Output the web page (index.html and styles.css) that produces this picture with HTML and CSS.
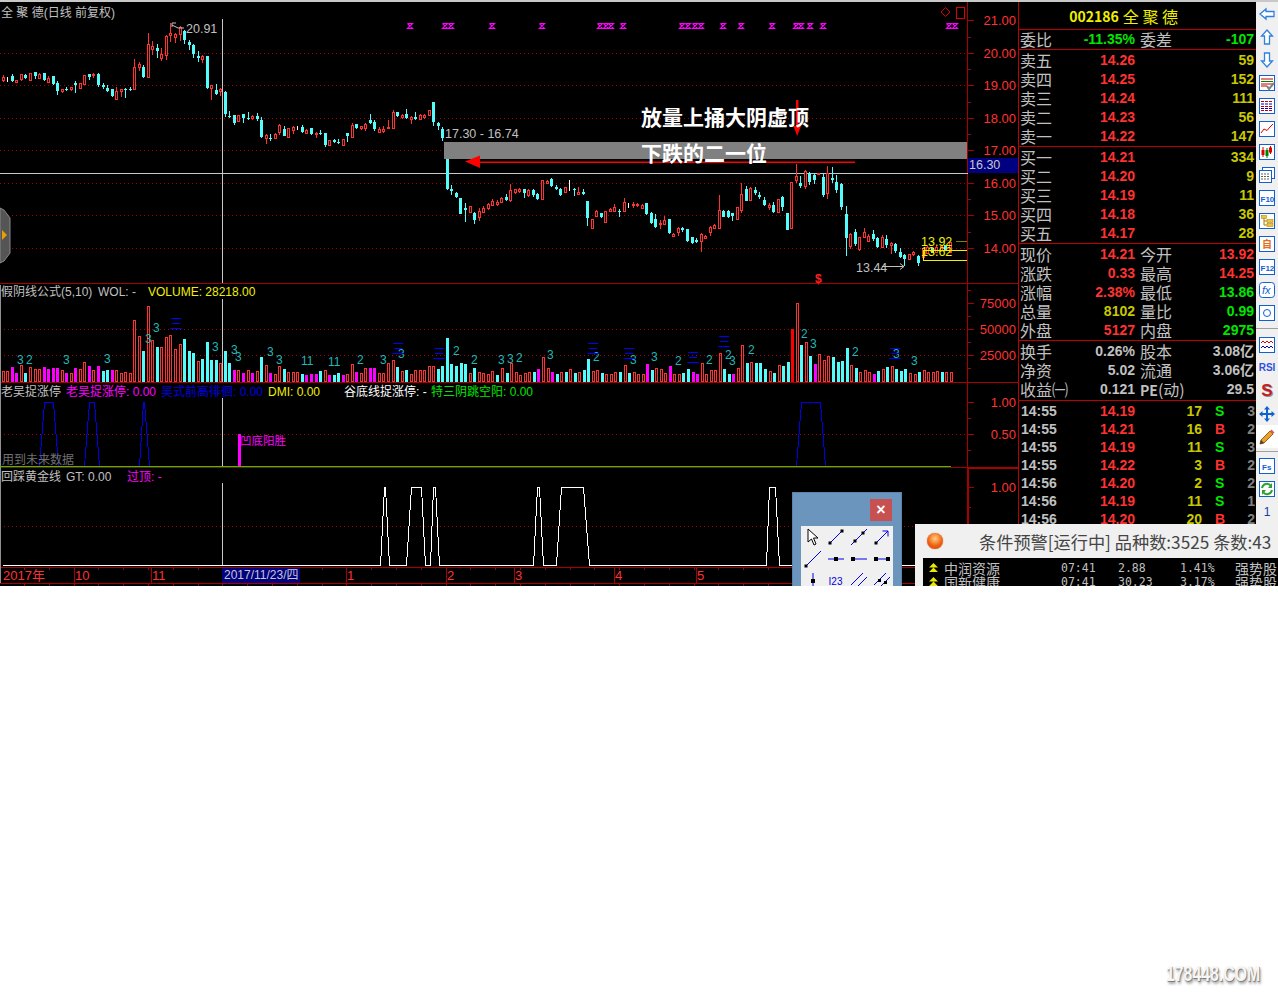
FILE: index.html
```html
<!DOCTYPE html>
<html lang="zh-CN">
<head>
    <meta charset="UTF-8">
    <meta name="viewport" content="width=device-width, initial-scale=1.0">
    <title>全聚德 日线</title>
    <link rel="stylesheet" href="styles.css">
</head>
<body>
    <div class="app">
        <div class="top-strip"></div>
        <div class="main">
            <svg class="chart" width="1018" height="584" viewBox="0 2 1018 584">
                <!-- Сетка и оси -->
                <g class="dots">
                    <path d="M0 53.5H968M0 85.5H968M0 118.5H968M0 150.5H968M0 183.5H968M0 215.5H968M0 248.5H968"/>
                    <path d="M0 329.5H968M0 355.5H968M0 434.5H968M0 526.5H968"/>
                </g>
                <g class="axis">
                    <path d="M0 283.5H1018M0 382.5H1018M0 467.5H1018M0 567.5H968M0 583.5H968"/>
                    <path d="M967.5 2V566"/>
                    <path class="thick" d="M968 468H1018M968 468V567"/>
                    <path id="ticks" d=""/>
                </g>
                <path class="left-edge" d="M0.5 285V583"/>

                <!-- Перекрестие -->
                <path class="cross" d="M222.5 19V283M222.5 299V382M222.5 398V467M222.5 483V566M0 173.5H968"/>

                <g id="candles"></g>
                <g id="volumes"></g>
                <path id="blue-humps" class="hump-blue" d=""/>
                <path id="white-humps" class="hump-white" d=""/>
                <path class="green-line" d="M0 466.5H951"/>
                <g id="marks" class="marks"></g>

                <!-- Рамка и стрелки разметки -->
                <rect class="band" x="444" y="142" width="523" height="17"/>
                <path class="red-arrow" d="M480 161.5H855V163H480Z"/>
                <path class="red-arrow" d="M465 161.5L480 155.5V168Z"/>
                <path class="red-arrow" d="M796 100H798.500V126H801L797.200 136L793.500 126H796Z"/>
                <text class="note" x="641" y="125">放量上捅大阴虚顶</text>
                <text class="note" x="641" y="161">下跌的二一位</text>

                <path class="price-line" d="M923 250.500H967M923 260.500H967M923.500 250V261"/>
                <path class="price-line dim" d="M956 241.500H967"/>
                <path class="red-outline" d="M945.500 7.500L950 12L945.500 16.500L941 12Z"/>
                <rect class="red-outline" x="956.500" y="7.500" width="8" height="11"/>
                <path class="gray-line" d="M172 27V23H176M172 25L178 28H184M882 266.500H904M900 263.500L904 266.500L900 269.500"/>

                <polygon class="tab" points="0,208 4,210 10,218 10,253 4,261 0,263"/>
                <polygon class="tab-arrow" points="2,230 7,235 2,240"/>

                <!-- Подписи -->
                <text class="lbl12 gray" x="1" y="17">全 聚 德(日线 前复权)</text>
                <text class="num gray" x="186" y="33">20.91</text>
                <text class="num gray" x="445" y="138">17.30 - 16.74</text>
                <text class="num gray" x="856" y="272">13.44</text>
                <text class="num yellow" x="921" y="246">13.92</text>
                <text class="num yellow" x="921" y="256">13.62</text>
                <text class="dollar" x="815" y="283">$</text>

                <text class="lbl12 gray" x="1" y="296">假阴线公式(5,10)</text>
                <text class="lbl12 gray" x="98" y="296">WOL: -</text>
                <text class="lbl12 yellow" x="148" y="296">VOLUME: 28218.00</text>

                <text class="lbl12 gray" x="1" y="396">老吴捉涨停</text>
                <text class="lbl12 magenta" x="66" y="396">老吴捉涨停: 0.00</text>
                <text class="lbl12 blue" x="161" y="396">吴式前高徘徊: 0.00</text>
                <text class="lbl12 yellow" x="268" y="396">DMI: 0.00</text>
                <text class="lbl12 white" x="344" y="396">谷底线捉涨停: -</text>
                <text class="lbl12 green" x="431" y="396">特三阴跳空阳: 0.00</text>
                <text class="lbl12 dark" x="2" y="464">用到未来数据</text>
                <rect class="magenta-bar" x="238" y="434" width="3" height="32"/>
                <text class="lbl-sm magenta" x="240" y="445">凹底阳胜</text>

                <text class="lbl12 gray" x="1" y="481">回踩黄金线</text>
                <text class="lbl12 gray" x="66" y="481">GT: 0.00</text>
                <text class="lbl12 magenta" x="127" y="481">过顶: -</text>

                <g class="axis-text" text-anchor="end">
                    <text x="1016" y="25">21.00</text>
                    <text x="1016" y="58">20.00</text>
                    <text x="1016" y="90">19.00</text>
                    <text x="1016" y="123">18.00</text>
                    <text x="1016" y="155">17.00</text>
                    <text x="1016" y="188">16.00</text>
                    <text x="1016" y="220">15.00</text>
                    <text x="1016" y="253">14.00</text>
                    <text x="1016" y="308">75000</text>
                    <text x="1016" y="334">50000</text>
                    <text x="1016" y="360">25000</text>
                    <text x="1016" y="407">1.00</text>
                    <text x="1016" y="439">0.50</text>
                    <text x="1016" y="492">1.00</text>
                </g>
                <rect class="cur-box" x="968" y="158" width="50" height="15"/>
                <text class="cur-text" x="969" y="169">16.30</text>

                <!-- Ось дат -->
                <path class="axis-v" d="M74.500 567V583M151.500 567V583M346.500 567V583M446.500 567V583M514.500 567V583M614.500 567V583M696.500 567V583"/>
                <g class="date">
                    <text x="3" y="580">2017年</text>
                    <text x="75" y="580">10</text>
                    <text x="152" y="580">11</text>
                    <text x="347" y="580">1</text>
                    <text x="447" y="580">2</text>
                    <text x="515" y="580">3</text>
                    <text x="615" y="580">4</text>
                    <text x="697" y="580">5</text>
                </g>
                <rect class="cur-box" x="222" y="568" width="78" height="15"/>
                <text class="cur-date" x="224" y="579">2017/11/23/四</text>
            </svg>

            <!-- Панель котировок -->
            <div class="quote">
                <div class="q-title"><span class="code">002186</span><span class="name">全 聚 德</span></div>
                <div class="q-sect">
                    <div class="q-row"><span>委比</span><b class="green">-11.35%</b><span class="lab2">委差</span><b class="green">-107</b></div>
                </div>
                <div class="q-sect pad1">
                    <div class="q-row"><span>卖五</span><b class="red">14.26</b><span></span><b class="olive">59</b></div>
                    <div class="q-row"><span>卖四</span><b class="red">14.25</b><span></span><b class="olive">152</b></div>
                    <div class="q-row"><span>卖三</span><b class="red">14.24</b><span></span><b class="olive">111</b></div>
                    <div class="q-row"><span>卖二</span><b class="red">14.23</b><span></span><b class="olive">56</b></div>
                    <div class="q-row"><span>卖一</span><b class="red">14.22</b><span></span><b class="olive">147</b></div>
                </div>
                <div class="q-sect pad1">
                    <div class="q-row"><span>买一</span><b class="red">14.21</b><span></span><b class="olive">334</b></div>
                    <div class="q-row"><span>买二</span><b class="red">14.20</b><span></span><b class="olive">9</b></div>
                    <div class="q-row"><span>买三</span><b class="red">14.19</b><span></span><b class="olive">11</b></div>
                    <div class="q-row"><span>买四</span><b class="red">14.18</b><span></span><b class="olive">36</b></div>
                    <div class="q-row"><span>买五</span><b class="red">14.17</b><span></span><b class="olive">28</b></div>
                </div>
                <div class="q-sect pad1">
                    <div class="q-row"><span>现价</span><b class="red">14.21</b><span class="lab2">今开</span><b class="red">13.92</b></div>
                    <div class="q-row"><span>涨跌</span><b class="red">0.33</b><span class="lab2">最高</span><b class="red">14.25</b></div>
                    <div class="q-row"><span>涨幅</span><b class="red">2.38%</b><span class="lab2">最低</span><b class="green">13.86</b></div>
                    <div class="q-row"><span>总量</span><b class="olive">8102</b><span class="lab2">量比</span><b class="green">0.99</b></div>
                    <div class="q-row"><span>外盘</span><b class="red">5127</b><span class="lab2">内盘</span><b class="green">2975</b></div>
                </div>
                <div class="q-sect pad2">
                    <div class="q-row"><span>换手</span><b>0.26%</b><span class="lab2">股本</span><b>3.08亿</b></div>
                    <div class="q-row"><span>净资</span><b>5.02</b><span class="lab2">流通</span><b>3.06亿</b></div>
                    <div class="q-row"><span>收益㈠</span><b>0.121</b><span class="lab2"><span class="pe">PE</span>(动)</span><b>29.5</b></div>
                </div>
                <div class="trades">
                    <div class="t-row"><b>14:55</b><b class="red">14.19</b><b class="olive">17</b><b class="green side">S</b><b class="dim">3</b></div>
                    <div class="t-row"><b>14:55</b><b class="red">14.21</b><b class="olive">16</b><b class="red side">B</b><b class="dim">2</b></div>
                    <div class="t-row"><b>14:55</b><b class="red">14.19</b><b class="olive">11</b><b class="green side">S</b><b class="dim">3</b></div>
                    <div class="t-row"><b>14:55</b><b class="red">14.22</b><b class="olive">3</b><b class="red side">B</b><b class="dim">2</b></div>
                    <div class="t-row"><b>14:56</b><b class="red">14.20</b><b class="olive">2</b><b class="green side">S</b><b class="dim">2</b></div>
                    <div class="t-row"><b>14:56</b><b class="red">14.19</b><b class="olive">11</b><b class="green side">S</b><b class="dim">1</b></div>
                    <div class="t-row"><b>14:56</b><b class="red">14.20</b><b class="olive">20</b><b class="red side">B</b><b class="dim">2</b></div>
                </div>
            </div>

            <!-- Правая панель кнопок -->
            <div class="toolbar">
                <div class="tool"><svg width="16" height="16" viewBox="0 0 16 16"><path class="ic" d="M1 8L7 3V5.500H15V10.500H7V13Z"/></svg></div>
                <div class="tool"><svg width="16" height="16" viewBox="0 0 16 16"><path class="ic" d="M8 1L13.500 7H10.500V15H5.500V7H2.500Z"/></svg></div>
                <div class="tool"><svg width="16" height="16" viewBox="0 0 16 16"><path class="ic" d="M8 15L13.500 9H10.500V1H5.500V9H2.500Z"/></svg></div>
                <div class="tool"><svg width="16" height="16" viewBox="0 0 16 16"><rect class="box" x="0.500" y="0.500" width="15" height="15"/><path d="M2 4H14M2 11H8" stroke="#c00000"/><path d="M2 6.500H14" stroke="#008000"/><path d="M2 9H14" stroke="#c00000"/><path d="M8 11L10 14L15 8" fill="none" stroke="#808080" stroke-width="2"/></svg></div>
                <div class="tool"><svg width="16" height="16" viewBox="0 0 16 16"><rect class="box" x="0.500" y="0.500" width="15" height="15"/><path d="M2 3.500H14M2 8.500H14M2 12.500H14" stroke="#c00000" stroke-dasharray="3 1"/><path d="M2 6H14M2 10.500H14" stroke="#0000c0" stroke-dasharray="3 1"/></svg></div>
                <div class="tool"><svg width="16" height="16" viewBox="0 0 16 16"><rect class="box" x="0.500" y="0.500" width="15" height="15"/><path d="M2 12L5 8L8 9.500L11 6L14 3" fill="none" stroke="#e00000"/></svg></div>
                <div class="tool"><svg width="16" height="16" viewBox="0 0 16 16"><rect class="box" x="0.500" y="0.500" width="15" height="15"/><path d="M4 3V13M11.500 2V10" stroke="#c00000"/><path d="M8 4V14" stroke="#008000"/><rect x="2.500" y="6" width="3" height="5" fill="#e00000"/><rect x="6.500" y="6" width="3" height="6" fill="#008000"/><rect x="10" y="3.500" width="3" height="5" fill="#e00000"/></svg></div>
                <div class="tool"><svg width="16" height="16" viewBox="0 0 16 16"><rect class="box" x="3.500" y="0.500" width="12" height="11"/><rect class="box" x="0.500" y="3.500" width="12" height="12"/><path d="M2 7H11M2 9.500H11M2 12H11" stroke="#606060" stroke-dasharray="2 1"/></svg></div>
                <div class="tool"><svg width="16" height="16" viewBox="0 0 16 16"><rect class="box" x="0.500" y="0.500" width="15" height="15"/><text class="ic-text" x="1.500" y="11.500">F10</text></svg></div>
                <div class="tool"><svg width="16" height="16" viewBox="0 0 16 16"><rect class="box" x="0.500" y="0.500" width="15" height="15"/><path d="M5 5V12H8M5 8H8" fill="none" stroke="#a08000"/><rect x="2.500" y="2.500" width="5" height="3" fill="#f0c040" stroke="#a08000" stroke-width="0.500"/><rect x="8" y="6.500" width="6" height="3" fill="#f0c040" stroke="#a08000" stroke-width="0.500"/><rect x="8" y="10.500" width="6" height="3" fill="#f0c040" stroke="#a08000" stroke-width="0.500"/></svg></div>
                <div class="tool"><svg width="16" height="16" viewBox="0 0 16 16"><rect class="box" x="0.500" y="0.500" width="15" height="15"/><text class="ic-cjk" x="3" y="12">自</text></svg></div>
                <div class="tool"><svg width="16" height="16" viewBox="0 0 16 16"><rect class="box" x="0.500" y="0.500" width="15" height="15"/><text class="ic-text" x="1.500" y="11.500">F12</text></svg></div>
                <div class="tool"><svg width="16" height="16" viewBox="0 0 16 16"><rect class="box round" x="0.500" y="0.500" width="15" height="15" rx="3"/><text class="ic-ital" x="3" y="12">fx</text></svg></div>
                <div class="tool"><svg width="16" height="16" viewBox="0 0 16 16"><rect class="box" x="0.500" y="0.500" width="15" height="15"/><circle cx="8" cy="8" r="3.500" fill="none" stroke="#1060d0"/></svg></div>
                <div class="tool-sep"></div>
                <div class="tool"><svg width="16" height="16" viewBox="0 0 16 16"><rect class="box" x="0.500" y="0.500" width="15" height="15"/><path d="M2 6L4 4L6 6L8 4L10 6L12 4L14 6" fill="none" stroke="#e00000"/><path d="M2 11L4 9L6 11L8 9L10 11L12 9L14 11" fill="none" stroke="#0000c0"/></svg></div>
                <div class="tool"><span class="rsi">RSI</span></div>
                <div class="tool"><span class="big-s">S</span></div>
                <div class="tool"><svg width="16" height="16" viewBox="0 0 16 16"><path d="M8 0L11 3.500H9V7H12.500V5L16 8L12.500 11V9H9V12.500H11L8 16L5 12.500H7V9H3.500V11L0 8L3.500 5V7H7V3.500H5Z" fill="#1060d0"/></svg></div>
                <div class="tool active"><svg width="16" height="16" viewBox="0 0 16 16"><path d="M1 15L2 11L11 2L14 5L5 14Z" fill="#e8a030" stroke="#a06010"/><path d="M11 2L12.500 0.500L15.500 3.500L14 5Z" fill="#d06060"/><path d="M1 15L2 11L5 14Z" fill="#404040"/></svg></div>
                <div class="tool-sep low"></div>
                <div class="tool"><svg width="16" height="16" viewBox="0 0 16 16"><rect class="box" x="0.500" y="0.500" width="15" height="15"/><text class="ic-text" x="3" y="11.500">Fs</text></svg></div>
                <div class="tool"><svg width="16" height="16" viewBox="0 0 16 16"><rect class="box" x="0.500" y="0.500" width="15" height="15"/><path d="M3 7A5 5 0 0 1 12 5M13 9A5 5 0 0 1 4 11" fill="none" stroke="#30a030" stroke-width="2"/><path d="M13 2V7H9ZM3 14V9H7Z" fill="#30a030"/></svg></div>
                <div class="tool one">1</div>
            </div>
        </div>

        <!-- Окно инструментов рисования -->
        <div class="palette">
            <div class="pal-head"><div class="pal-close">×</div></div>
            <div class="pal-grid">
                <svg class="pal-ic" viewBox="0 0 18 18"><path d="M4 1V14L7.500 11L10 17L12 16L9.500 10L14 10Z" fill="#fff" stroke="#000"/></svg>
                <svg class="pal-ic" viewBox="0 0 18 18"><path class="pl" d="M3 15L15 3"/><rect x="1.500" y="13.500" width="3" height="3"/><rect x="13.500" y="1.500" width="3" height="3"/></svg>
                <svg class="pal-ic" viewBox="0 0 18 18"><path class="pl" d="M1 17L17 1"/><rect x="3.500" y="11.500" width="3" height="3"/><rect x="11.500" y="3.500" width="3" height="3"/></svg>
                <svg class="pal-ic" viewBox="0 0 18 18"><path class="pl" d="M3 15L15 3M9.500 3H15V8.500"/><rect x="1.500" y="13.500" width="3" height="3"/></svg>
                <svg class="pal-ic" viewBox="0 0 18 18"><path class="pl" d="M2 16L17 1"/><rect x="0.500" y="14.500" width="3" height="3"/></svg>
                <svg class="pal-ic" viewBox="0 0 18 18"><path class="pl" d="M1 9H17"/><rect x="7" y="7" width="4" height="4"/></svg>
                <svg class="pal-ic" viewBox="0 0 18 18"><path class="pl" d="M2 9H17"/><rect x="1" y="7" width="4" height="4"/></svg>
                <svg class="pal-ic" viewBox="0 0 18 18"><path class="pl" d="M2 9H16"/><rect x="1" y="7" width="4" height="4"/><rect x="13" y="7" width="4" height="4"/></svg>
                <svg class="pal-ic" viewBox="0 0 18 18"><path class="pl" d="M9 1V17"/><rect x="7" y="7" width="4" height="4"/></svg>
                <div class="pal-num">I23</div>
                <svg class="pal-ic" viewBox="0 0 18 18"><path class="pl" d="M1 13L13 1M5 17L17 5"/></svg>
                <svg class="pal-ic" viewBox="0 0 18 18"><path class="pl" d="M1 13L13 1M5 17L17 5"/><rect x="5" y="7" width="3" height="3"/><rect x="11" y="9" width="3" height="3"/></svg>
            </div>
        </div>

        <!-- Окно условного предупреждения -->
        <div class="alert">
            <div class="alert-head">
                <div class="ball"></div>
                <div class="alert-title">条件预警[运行中] 品种数:3525 条数:43</div>
            </div>
            <div class="alert-list">
                <div class="a-row">
                    <svg class="chev" width="9" height="11" viewBox="0 0 10 12"><path d="M5 0L10 5H0ZM5 5L10 10H0Z" fill="#e8e800"/></svg>
                    <span class="a-name">中润资源</span><span>07:41</span><span>2.88</span><span>1.41%</span><span class="a-name">强势股</span>
                </div>
                <div class="a-row">
                    <svg class="chev" width="9" height="11" viewBox="0 0 10 12"><path d="M5 0L10 5H0ZM5 5L10 10H0Z" fill="#e8e800"/></svg>
                    <span class="a-name">国新健康</span><span>07:41</span><span>30.23</span><span>3.17%</span><span class="a-name">强势股</span>
                </div>
            </div>
        </div>
    </div>

    <div class="watermark">178448.COM</div>
    <script src="chart.js"></script>
</body>
</html>
```

FILE: styles.css
```css
* {
    box-sizing: border-box;
}

body {
    margin: 0;
    height: 1000px;
    overflow: hidden;
    background-color: #fff;
    font-family: "Liberation Sans", "Noto Sans CJK SC", sans-serif;
}

.app {
    position: relative;
    width: 1278px;
    height: 586px;
    overflow: hidden;
    background-color: #000;
}

.top-strip {
    height: 2px;
    background-color: #c8c8c8;
}

.main {
    display: flex;
    height: 584px;
}

/* График */
.chart {
    display: block;
    flex: none;
    background-color: #000;
    font-family: "Liberation Sans", "Noto Sans CJK SC", sans-serif;
}

.dots path {
    fill: none;
    stroke: #a80000;
    stroke-dasharray: 1 3;
}

.axis path, .axis-v {
    fill: none;
    stroke: #a80000;
    shape-rendering: crispEdges;
}

.axis .thick {
    stroke-width: 2;
}

.left-edge {
    stroke: #909090;
}

.cross {
    fill: none;
    stroke: #c8c8c8;
    shape-rendering: crispEdges;
}

.hump-blue {
    fill: none;
    stroke: #0000e6;
    shape-rendering: crispEdges;
}

.hump-white {
    fill: none;
    stroke: #fff;
    shape-rendering: crispEdges;
}

.green-line {
    stroke: #00e000;
    shape-rendering: crispEdges;
}

.marks path {
    fill: none;
    stroke: #ff00ff;
    stroke-width: 1.2;
}

.band {
    fill: #808080;
}

.red-arrow {
    fill: #ff0000;
}

.note {
    font-family: "Noto Sans CJK SC", sans-serif;
    font-size: 21px;
    font-weight: 700;
    fill: #fff;
}

.price-line {
    fill: none;
    stroke: #f0f000;
    shape-rendering: crispEdges;
}

.price-line.dim {
    stroke: #808000;
}

.red-outline {
    fill: none;
    stroke: #e00000;
}

.gray-line {
    fill: none;
    stroke: #c0c0c0;
}

.tab {
    fill: #555;
    stroke: #888;
}

.tab-arrow {
    fill: #e8a000;
}

.lbl12 {
    font-size: 12px;
}

.lbl-sm {
    font-size: 11.5px;
}

.num {
    font-size: 12.5px;
}

.gray {
    fill: #c0c0c0;
}

.yellow {
    fill: #f0f000;
}

.magenta {
    fill: #ff00ff;
}

.blue {
    fill: #0000e0;
}

.white {
    fill: #fff;
}

.green {
    fill: #00e600;
    color: #00e600;
}

.dark {
    fill: #707070;
}

.magenta-bar {
    fill: #ff00ff;
}

.dollar {
    font-size: 12px;
    font-weight: 700;
    fill: #ff2020;
}

.axis-text text {
    font-size: 13px;
    fill: #ff3232;
}

.cur-box {
    fill: #000080;
}

.cur-text, .cur-date {
    font-size: 12.5px;
    fill: #c8c8c8;
}

.cur-date {
    font-size: 12px;
}

.date text {
    font-size: 13px;
    fill: #ff3232;
}

.vol-label {
    font-size: 12px;
    fill: #1fb8b8;
}

.vol-cjk {
    font-family: "Noto Sans CJK SC", sans-serif;
    font-size: 13px;
    fill: #0000ff;
}

/* Панель котировок */
.quote {
    flex: none;
    display: flex;
    flex-direction: column;
    width: 238px;
    border-left: 1px solid #c00000;
    background-color: #000;
    font-family: "Noto Sans CJK SC", sans-serif;
    font-size: 16px;
    color: #c0c0c0;
    overflow: hidden;
}

.quote b {
    font-family: "Liberation Sans", "Noto Sans CJK SC", sans-serif;
    font-size: 14px;
    font-weight: 700;
}

.q-title {
    display: flex;
    justify-content: flex-end;
    align-items: center;
    gap: 4px;
    flex: none;
    height: 28px;
    padding-right: 78px;
    border-bottom: 1px solid #c00000;
    color: #f0f000;
}

.q-title .code {
    font-size: 14px;
    font-weight: 700;
}

.q-title .name {
    font-size: 16px;
}

.q-sect {
    flex: none;
    border-bottom: 1px solid #c00000;
}

.pad1 {
    padding-top: 1px;
}

.pad2 {
    padding-top: 1px;
    padding-bottom: 1px;
}

.q-row {
    display: grid;
    grid-template-columns: 40px 75px 40px 79px;
    height: 19px;
    line-height: 19px;
    padding-left: 1px;
    white-space: nowrap;
}

.q-row b {
    text-align: right;
}

.q-row b:first-of-type {
    font-size: 14px;
}

.q-row .lab2 {
    padding-left: 5px;
}

.pe {
    font-size: 14px;
    font-weight: 700;
}

.red {
    color: #ff3232;
}

.olive {
    color: #c8c800;
}

.trades {
    flex: 1;
    padding-top: 1px;
    overflow: hidden;
}

.t-row {
    display: grid;
    grid-template-columns: 41px 73px 67px 22px 31px;
    height: 18px;
    line-height: 18px;
    padding-left: 2px;
}

.t-row b {
    text-align: right;
}

.t-row b:first-child {
    text-align: left;
}

.t-row .side {
    text-align: left;
    padding-left: 13px;
}

.t-row .dim {
    color: #808080;
}

/* Правая панель кнопок */
.toolbar {
    flex: none;
    display: flex;
    flex-direction: column;
    width: 22px;
    background-color: #f0f0f0;
}

.tool {
    flex: none;
    display: flex;
    justify-content: center;
    align-items: center;
    height: 23px;
}

.tool.active {
    background-color: #fff;
}

.tool-sep {
    flex: none;
    height: 10px;
    margin-top: -1px;
    padding-top: 5px;
}

.tool-sep::before {
    content: "";
    display: block;
    height: 1px;
    background-color: #a0a0a0;
}

.tool-sep.low {
    height: 6px;
    margin-top: 0;
    padding-top: 3px;
}

.ic {
    fill: #fff;
    stroke: #3080e0;
    stroke-width: 1.3;
}

.box {
    fill: #fff;
    stroke: #1060d0;
}

.ic-text {
    font-size: 8px;
    font-weight: 700;
    fill: #1060d0;
}

.ic-cjk {
    font-family: "Noto Sans CJK SC", sans-serif;
    font-size: 10px;
    font-weight: 700;
    fill: #e07020;
}

.ic-ital {
    font-size: 11px;
    font-style: italic;
    fill: #1060d0;
}

.rsi {
    font-size: 10px;
    font-weight: 700;
    color: #3050e0;
}

.big-s {
    font-size: 17px;
    font-weight: 700;
    line-height: 1;
    color: #c02020;
    text-shadow: 1px 1px 0 #909090;
}

.one {
    font-size: 12px;
    color: #1040a0;
}

/* Окно инструментов */
.palette {
    position: absolute;
    left: 792px;
    top: 492px;
    width: 110px;
    height: 94px;
    overflow: hidden;
    background-color: #6b95bd;
    border: 1px solid #5b83ad;
    border-bottom: 0;
}

.pal-head {
    display: flex;
    justify-content: flex-end;
    height: 33px;
    padding: 6px 9px 0 0;
}

.pal-close {
    width: 22px;
    height: 22px;
    background-color: #c75050;
    color: #fff;
    font-size: 16px;
    font-weight: 700;
    line-height: 21px;
    text-align: center;
}

.pal-grid {
    display: grid;
    grid-template-columns: repeat(4, 23px);
    grid-auto-rows: 22px;
    width: 92px;
    margin-left: 8px;
    background-color: #f0f0f0;
    place-items: center;
}

.pal-ic {
    display: block;
    width: 18px;
    height: 18px;
}

.pl {
    fill: none;
    stroke: #0000e0;
}

.pal-num {
    font-size: 10px;
    color: #0000e0;
}

/* Окно предупреждения */
.alert {
    position: absolute;
    left: 915px;
    top: 524px;
    width: 363px;
    height: 62px;
    overflow: hidden;
    background-color: #f0f0f0;
}

.alert-head {
    display: flex;
    align-items: center;
    gap: 36px;
    height: 34px;
    padding-left: 12px;
}

.ball {
    flex: none;
    width: 16px;
    height: 16px;
    border-radius: 50%;
    background: radial-gradient(circle at 50% 35%, #ffd080 0, #f06010 55%, #d04010 100%);
    box-shadow: 0 0 1px #a05030;
}

.alert-title {
    font-family: "Noto Sans CJK SC", sans-serif;
    font-size: 17.2px;
    color: #444;
    white-space: nowrap;
}

.alert-list {
    height: 28px;
    margin-left: 8px;
    padding: 3px 0 0 6px;
    background-color: #000;
    overflow: hidden;
}

.a-row {
    display: grid;
    grid-template-columns: 15px 117px 57px 62px 55px 60px;
    align-items: center;
    height: 14px;
    line-height: 14px;
    font-family: "DejaVu Sans Mono", monospace;
    font-size: 11.5px;
    color: #c0c0c0;
    white-space: nowrap;
}

.a-name {
    font-family: "Noto Sans CJK SC", sans-serif;
    font-size: 14px;
}

.watermark {
    position: absolute;
    left: 1166px;
    top: 961px;
    font-size: 22px;
    font-weight: 700;
    color: #f6f6f6;
    text-shadow: 1px 1px 1px #777, 2px 3px 3px #aaa;
    white-space: nowrap;
    transform: scaleX(0.72);
    transform-origin: left top;
}
```

FILE: chart.js
```javascript
// Значения сняты со снимка при увеличении 3x: тип, верх тела, низ тела, верх тени, низ тени
var candlesA = "r231,241,226,247 w231,247,231,247 c228,243,222,245 r240,245,240,250 r223,236,221,242 c225,234,221,236 r220,240,220,240 c217,228,215,236 r223,233,220,237 c220,240,218,243 r234,245,228,246 c229,252,228,256 c249,273,243,285 r268,273,266,279 c266,269,262,274 r262,267,260,274 c250,256,243,278 r250,263,250,263 r226,252,226,252 c223,230,221,240 r223,226,219,234 c221,256,219,262 c256,260,250,266 c264,272,256,277 c268,288,266,290 r273,296,262,297 r268,272,266,290 c266,270,264,294 c266,270,260,272 r202,268,178,270 r193,202,187,212 c201,232,195,235 r133,231,100,233 r139,147,124,165 c145,153,132,175 r161,173,145,183 r109,164,105,180 r100,104,70,125 r103,110,100,128 r82,102,78,123 c93,121,90,133 c125,135,120,150 c136,162,133,173 c168,173,153,186 r168,178,165,189 c168,263,168,266 r256,265,255,299 c270,282,252,286 r268,273,265,289 c275,343,273,350 c348,352,334,355 c346,370,345,374 r346,364,346,364 c343,355,342,368 c354,356,336,360 r348,355,345,360 c348,357,340,362 c360,411,352,414 r405,414,402,431 c413,415,402,422 r401,414,399,416 r376,395,372,406 c387,407,379,409 r385,410,385,410 r381,391,378,403 w378,390,378,390 c380,395,376,399 r389,399,387,401 c385,402,384,406 r400,402,395,413 c398,401,390,405 c400,435,398,440 r421,434,419,437 c421,425,418,430 c425,428,418,431 r418,434,418,434 c400,408,400,426 r375,410,369,413 c373,383,371,387 r379,384,377,389 r371,383,369,393 c361,369,343,372 c366,386,361,392 r387,395,381,397 r387,392,379,399 r381,385,360,386 r336,383,330,385 c337,347,335,352 r344,351,342,357 c342,353,327,356 r351,357,348,372 c352,356,336,360 r344,356,342,358 r344,351,342,356 r329,345,329,345";
var candlesB = "c307,365,307,378 c368,378,366,389 c388,413,382,422 c478,566,476,570 c567,572,555,584 c578,590,576,594 c595,641,595,643 c624,629,610,665 r619,637,617,640 c639,660,637,671 r633,650,625,662 r625,635,618,636 r612,625,610,630 r604,615,598,618 r605,613,600,618 r593,606,590,608 c590,600,581,604 r569,600,553,607 r568,575,567,582 r566,574,563,580 c568,580,566,595 r571,584,568,590 c571,585,566,590 c583,597,578,600 r540,598,540,598 r543,549,541,552 c537,558,535,562 c560,568,556,570 c568,585,565,588 r562,576,560,580 w540,572,540,572 c566,569,563,587 r575,581,562,582 c576,581,566,584 c604,655,604,677 r657,685,657,685 r632,648,630,650 c640,652,638,655 r634,665,634,665 r628,632,625,635 r621,632,612,635 c632,634,628,650 r605,634,594,636 w608,625,608,625 r612,616,605,625 r612,616,610,622 r615,623,612,625 c610,641,608,645 c640,668,636,672 c658,680,642,683 r668,672,660,688 r660,672,648,675 c658,700,656,703 r702,708,698,710 r683,696,680,708 c685,690,682,695 c687,722,686,726 c712,728,710,733 c719,725,714,730 r701,724,700,755 r708,714,706,716 r680,697,678,708 r675,684,672,686 r630,685,585,687 c633,650,630,652 c634,650,631,653 c640,647,638,662 r622,656,622,656 r583,630,549,640 c566,602,557,604 r565,600,560,602 c570,578,561,584 c584,592,575,596 c600,616,590,618 r615,622,610,630 c615,635,605,638 r598,635,598,635 c590,622,588,632 c640,690,640,690 r547,683,547,683 r528,540,492,550 c550,558,528,565 r512,557,510,566 c518,545,516,555 c526,540,518,553 r520,522,518,524 c531,586,518,590 r520,578,497,596 c534,540,501,550 c547,570,525,578 c553,622,550,630 c642,715,618,768 r702,738,700,748 c697,733,688,737 r712,748,710,752 r697,710,685,712 r708,723,702,727 c703,718,691,722 c714,742,710,745 r710,740,706,742 c718,735,705,745 r728,735,725,762 c732,752,728,760 c757,772,745,775 c765,778,762,798 r762,778,762,778 r757,762,754,768 c768,790,766,797 r745,770,745,770 r740,760,738,762 c745,760,745,760 r740,755,738,757 r738,750,738,752 c735,750,735,750 r725,755,725,755";

// Объём: тип и верх столбика (низ общий)
var volumesA = "r258 r258 m246 m264 r240 c264 r247 r252 r252 m247 m252 m250 m250 r256 m263 r264 m250 r252 r232 m244 r254 m243 c258 c256 m255 r256 r263 r262 r264 r106 r153 c198 r64 r166 c186 r186 r156 r150 r192 r178 c162 c198 c204 r228 c222 c170 c226 c224 r234 c198 c234 m255 r255 m264 r256 m264 r258 c216 r240 m264 r268 r244 c252 r262 r260 r260 c267 m270 m268 m268 c258 r254 m270 c270 c264 m270 r268 r238 m262 r264 r250 m248 m250 r264 r264 r234 r226 c246 r258 c256 r268 r256 r256 r256 r244 r243 c252 c244 c160 c237 c242 c234 c236 r264 c250 r262 r264 r266 r258 c270";
var volumesB = "r250 c264 r234 r262 r270 r264 r262 c262 m252 r216 r250 m262 c268 r262 c262 r253 c264 r262 c256 c222 r258 r256 c264 r268 r268 r262 c262 r240 c264 r262 r268 r268 m238 c256 r250 r252 r264 m244 r268 r268 c264 c252 m262 m268 r234 r266 r256 r256 r205 c252 c268 m268 r250 r181 c234 r232 c234 c234 c252 r258 c264 r240 c242 c231 R133 r55 c180 r172 c212 m238 r208 r224 r212 c216 c230 c228 c189 r240 c250 r262 r256 r262 m268 c258 r252 c246 r244 c252 c258 c252 r264 r266 c262 r256 r260 r262 r258 c260 r262 r262";

var COLORS = { r: "#ff3232", R: "#ff0000", c: "#54fcfc", m: "#ff00ff", w: "#ffffff" };

function px(v) {
    return Math.round(v / 3);
}

function drawCandles(data, x0, x1) {
    var list = data.split(" ");
    var step = (x1 - x0) / (list.length - 1);
    return list.map(function (item, i) {
        var kind = item[0];
        var v = item.slice(1).split(",").map(Number);
        var x = Math.floor(x0 + i * step) + 0.5;
        var top = px(v[0]), bot = px(v[1]), hi = px(v[2]), lo = px(v[3]);
        var color = COLORS[kind];
        var out = '<path d="M' + x + " " + hi + "V" + lo + '" stroke="' + color + '"/>';
        if (kind === "r") {
            out += '<rect x="' + (x - 1) + '" y="' + (top + 0.5) + '" width="2" height="' + Math.max(bot - top, 1) + '" fill="#000" stroke="' + color + '"/>';
        } else if (kind === "c") {
            out += '<rect x="' + (x - 1.5) + '" y="' + top + '" width="3" height="' + Math.max(bot - top, 1) + '" fill="' + color + '"/>';
        }
        return out;
    }).join("");
}

function drawVolumes(data, x0, x1) {
    var base = 381;
    var list = data.split(" ");
    var step = (x1 - x0) / (list.length - 1);
    return list.map(function (item, i) {
        var kind = item[0];
        var y = 285 + px(Number(item.slice(1)));
        var x = Math.floor(x0 + i * step) + 0.5;
        var color = COLORS[kind];
        if (kind === "r") {
            return '<rect x="' + (x - 1) + '" y="' + (y + 0.5) + '" width="2" height="' + (base - y) + '" fill="none" stroke="' + color + '"/>';
        }
        return '<rect x="' + (x - 1.5) + '" y="' + y + '" width="3" height="' + (base - y + 1) + '" fill="' + color + '"/>';
    }).join("");
}

// Горбы индикатора: начало, край верха слева, край верха справа, конец
function humps(list, top, bot, from, to) {
    var d = from === undefined ? "" : "M" + from + " " + bot;
    list.forEach(function (h) {
        d += (from === undefined ? "M" : "L") + (h[0] + 0.5) + " " + bot;
        d += "L" + (h[1] + 0.5) + " " + top + "H" + (h[2] + 0.5);
        d += "L" + (h[3] + 0.5) + " " + bot;
    });
    if (to !== undefined) {
        d += "L" + to + " " + bot;
    }
    return d;
}

function ticks() {
    var d = "";
    var i;
    for (i = 0; i < 8; i++) {
        d += "M968 " + (Math.round(20 + i * 32.5) + 0.5) + "H974";
        if (i < 7) {
            d += "M968 " + (Math.round(36.5 + i * 32.5) + 0.5) + "H971";
        }
    }
    [303, 329, 355].forEach(function (y) {
        d += "M968 " + (y + 0.5) + "H974M968 " + (y + 13.5) + "H971";
    });
    d += "M968 290.5H971M968 402.5H974M968 418.5H971M968 434.5H974M968 450.5H971";
    d += "M968 487.5H974M968 507.5H971M968 526.5H974M968 546.5H971";
    for (i = 0; i < 39; i++) {
        d += "M" + (Math.round(24 + i * 24.8) + 0.5) + " 567V570";
        d += "M" + (Math.round(24 + i * 24.8) + 0.5) + " 584V586";
    }
    return d;
}

function hourglass(x) {
    return '<path d="M' + (x - 2.5) + " 23.5H" + (x + 2.5) + "L" + (x - 2.5) + " 28.5H" + (x + 2.5) + "L" + (x - 2.5) + ' 23.5"/>';
}

// Подписи над столбиками объёма: x, y базовой линии, текст
var volumeLabels = [
    [17, 364, "3"], [26, 364, "2"], [63, 364, "3"], [104, 363, "3"], [145, 343, "3"], [153, 332, "3"],
    [212, 351, "3"], [231, 354, "3"], [235, 361, "3"], [267, 356, "3"], [276, 364, "3"], [301, 365, "11"],
    [328, 366, "11"], [357, 364, "2"], [380, 364, "3"], [398, 358, "3"], [453, 355, "2"], [471, 364, "2"],
    [498, 364, "3"], [507, 363, "3"], [516, 362, "2"], [547, 359, "3"], [593, 361, "2"], [630, 364, "3"],
    [651, 361, "3"], [675, 365, "2"], [706, 364, "2"], [725, 359, "2"], [729, 365, "3"], [748, 354, "2"],
    [801, 338, "2"], [810, 348, "3"], [852, 356, "2"], [893, 358, "3"], [911, 365, "3"]
];
var volumeMarks = [[170, 328], [392, 353], [433, 358], [587, 353], [623, 358], [687, 362], [718, 346], [889, 358]];
var markX = [410, 445, 451, 492, 542, 600, 606, 611, 623, 682, 688, 695, 701, 723, 741, 772, 796, 801, 810, 823, 949, 955];

var volumeText = volumeLabels.map(function (l) {
    return '<text class="vol-label" x="' + l[0] + '" y="' + l[1] + '">' + l[2] + "</text>";
}).join("") + volumeMarks.map(function (m) {
    return '<text class="vol-cjk" x="' + m[0] + '" y="' + m[1] + '">三</text>';
}).join("");

document.getElementById("candles").innerHTML = drawCandles(candlesA, 3.3, 429.3) + drawCandles(candlesB, 433.8, 950.2);
document.getElementById("volumes").innerHTML = drawVolumes(volumesA, 3.3, 497.3) + drawVolumes(volumesB, 502.7, 951.3) + volumeText;
document.getElementById("marks").innerHTML = markX.map(hourglass).join("");
document.getElementById("ticks").setAttribute("d", ticks());
document.getElementById("blue-humps").setAttribute("d", humps(
    [[39, 44, 53, 58], [84, 89, 94, 99], [139, 143, 144, 149], [796, 801, 820, 825]], 402.5, 466
));
document.getElementById("white-humps").setAttribute("d", humps(
    [[380, 384, 385, 389], [406, 411, 421, 425], [430, 433, 435, 439], [533, 537, 539, 543], [556, 561, 583, 589], [766, 769, 775, 779]],
    487.5, 565.5, 3, 968
));
```
